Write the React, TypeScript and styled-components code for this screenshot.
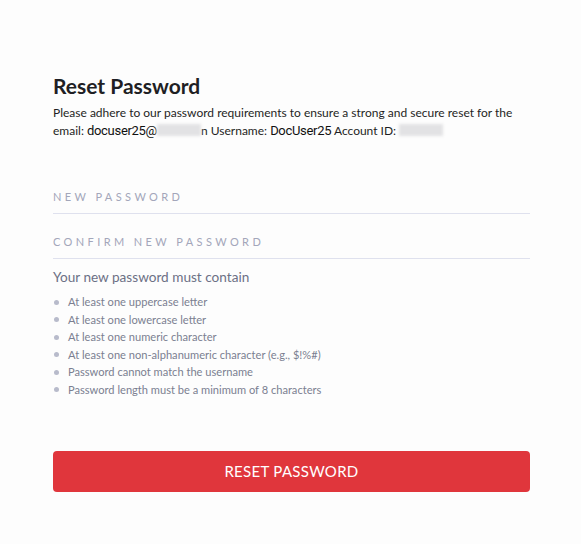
import React, { useState } from 'react';
import styled, { createGlobalStyle } from 'styled-components';

const GlobalStyle = createGlobalStyle`
  html, body {
    margin: 0;
    padding: 0;
    background: #fdfdfd;
  }
  body {
    font-family: Lato, "Open Sans", sans-serif;
    color: #222;
  }
`;

const Page = styled.div`
  width: 581px;
  height: 544px;
  box-sizing: border-box;
  padding: 72px 51px 0 53px;
`;

const Title = styled.h1`
  margin: 0;
  font-size: 21px;
  line-height: 28px;
  font-weight: 700;
  color: #1f1f24;
`;

const Intro = styled.p`
  margin: 4px 0 0;
  font-size: 12px;
  line-height: 18px;
  color: #1f1f24;
`;

const Value = styled.span`
  font-family: Roboto, "Open Sans", sans-serif;
  font-size: 13px;
  letter-spacing: -0.3px;
  font-weight: 400;
  color: #111;
`;

const Redacted = styled.span<{ $w: number }>`
  display: inline-block;
  width: ${(p) => p.$w}px;
  height: 12px;
  vertical-align: -1px;
  background: #e2e2e4;
  filter: blur(1.5px);
`;

const Fields = styled.form`
  margin-top: 49px;
  display: flex;
  flex-direction: column;
`;

const Field = styled.label`
  display: block;
  border-bottom: 1px solid #dfe1ee;
  padding-bottom: 8px;
  & + & {
    margin-top: 20px;
  }
`;

const FieldInput = styled.input`
  display: block;
  width: 100%;
  border: none;
  outline: none;
  background: transparent;
  padding: 0;
  font-family: Lato, sans-serif;
  font-size: 11px;
  line-height: 16px;
  letter-spacing: 3.4px;
  color: #333;
  &::placeholder {
    color: #a3a6ba;
    text-transform: uppercase;
  }
`;

const RulesTitle = styled.h2`
  margin: 8px 0 0;
  font-size: 13.6px;
  line-height: 20px;
  font-weight: 400;
  color: #6c7085;
`;

const Rules = styled.ul`
  list-style: none;
  margin: 6px 0 0;
  padding: 0;
`;

const Rule = styled.li`
  position: relative;
  padding-left: 15px;
  font-size: 11.1px;
  line-height: 17.6px;
  color: #7b7f91;
  &::before {
    content: '';
    position: absolute;
    left: 1px;
    top: 6.5px;
    width: 5px;
    height: 5px;
    border-radius: 50%;
    background: #b8bbcb;
  }
`;

const ResetButton = styled.button`
  display: block;
  width: 100%;
  height: 41px;
  margin-top: 52px;
  border: none;
  border-radius: 4px;
  background: #e0363c;
  color: #fff;
  font-family: Lato, sans-serif;
  font-size: 15px;
  letter-spacing: 0.3px;
  cursor: pointer;
`;

const rules = [
  'At least one uppercase letter',
  'At least one lowercase letter',
  'At least one numeric character',
  'At least one non-alphanumeric character (e.g., $!%#)',
  'Password cannot match the username',
  'Password length must be a minimum of 8 characters',
];

function App() {
  const [password, setPassword] = useState('');
  const [confirm, setConfirm] = useState('');

  return (
    <>
      <GlobalStyle />
      <Page>
        <Title>Reset Password</Title>
        <Intro>
          Please adhere to our password requirements to ensure a strong and secure reset for the
          email: <Value>docuser25@</Value>
          <Redacted $w={44} />n Username: <Value>DocUser25</Value> Account ID:{' '}
          <Redacted $w={44} />
        </Intro>
        <Fields onSubmit={(e) => e.preventDefault()}>
          <Field>
            <FieldInput
              type="password"
              placeholder="New password"
              value={password}
              onChange={(e) => setPassword(e.target.value)}
            />
          </Field>
          <Field>
            <FieldInput
              type="password"
              placeholder="Confirm new password"
              value={confirm}
              onChange={(e) => setConfirm(e.target.value)}
            />
          </Field>
        </Fields>
        <RulesTitle>Your new password must contain</RulesTitle>
        <Rules>
          {rules.map((r) => (
            <Rule key={r}>{r}</Rule>
          ))}
        </Rules>
        <ResetButton type="button">RESET PASSWORD</ResetButton>
      </Page>
    </>
  );
}

export default App;
